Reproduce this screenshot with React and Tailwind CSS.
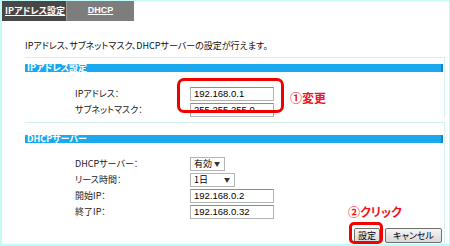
import React from 'react'

const jp = { fontFamily: '"Noto Sans CJK JP", "Liberation Sans", sans-serif', fontFeatureSettings: '"palt"' }
const num = { fontFamily: '"Liberation Sans", "Noto Sans CJK JP", sans-serif' }

function Bar({ title }) {
  return (
    <div className="h-[8px] w-[418px] bg-[#1aa9ee] border-r-2 border-[#1584c4] flex items-center pl-[2px]">
      <span className="text-[9px] leading-[8px] font-bold text-white whitespace-nowrap" style={jp}>{title}</span>
    </div>
  )
}

function Row({ label, children }) {
  return (
    <div className="flex items-center h-[14px]">
      <span className="w-[165px] pl-[50px] shrink-0 text-[9px] leading-[14px] text-[#222] whitespace-nowrap" style={jp}>{label}</span>
      {children}
    </div>
  )
}

function Field({ value }) {
  return (
    <div className="w-[84px] h-[14px] border border-[#b4b4b4] border-t-[#8c8c8c] bg-white pl-[3px] flex items-center text-[9.5px] text-black whitespace-nowrap" style={num}>
      {value}
    </div>
  )
}

function Pick({ value, width }) {
  return (
    <div className={`${width} h-[14px] border border-[#b4b4b4] bg-white pl-[3px] pr-[4px] flex items-center justify-between text-[9px] text-black whitespace-nowrap`} style={jp}>
      <span>{value}</span>
      <span className="text-[6px] leading-none text-[#333]">▼</span>
    </div>
  )
}

function Btn({ children, width }) {
  return (
    <div className={`${width} h-[15px] border border-[#707070] rounded-[2px] bg-gradient-to-b from-[#f6f6f6] to-[#d8d8d8] flex items-center justify-center text-[9px] text-black whitespace-nowrap`} style={jp}>
      {children}
    </div>
  )
}

export default function App() {
  return (
    <div className="relative w-[450px] h-[246px] bg-white border-l-2 border-t border-r border-b-2 border-[#c2fafa] overflow-hidden" style={jp}>
      <div className="flex -mt-px -ml-[2px] h-[21px]">
        <div className="w-[66px] bg-[#474747] flex items-center pl-[5px]">
          <span className="text-[9px] font-bold text-white underline whitespace-nowrap" style={jp}>IPアドレス設定</span>
        </div>
        <div className="w-[68px] bg-[#7d7d7d] border-l border-[#999] flex items-center justify-center">
          <span className="text-[9px] font-bold text-white underline" style={num}>DHCP</span>
        </div>
      </div>

      <div className="pl-[23px] pr-[5px]">
        <p className="mt-[19px] h-[12px] leading-[12px] text-[9px] text-[#111] whitespace-nowrap" style={jp}>
          IPアドレス、サブネットマスク、DHCPサーバーの設定が行えます。
        </p>

        <div className="mt-[5px] border-t border-r border-[#d4f1f1] pt-[6px] w-[420px]">
          <Bar title="IPアドレス設定" />
          <div className="mt-[15px] flex flex-col gap-[2px]">
            <Row label="IPアドレス："><Field value="192.168.0.1" /></Row>
            <Row label="サブネットマスク："><Field value="255.255.255.0" /></Row>
          </div>
        </div>

        <div className="mt-[5px] border-t border-r border-[#d4f1f1] pt-[12px] w-[420px]">
          <Bar title="DHCPサーバー" />
          <div className="mt-[14px] flex flex-col gap-[2px]">
            <Row label="DHCPサーバー："><Pick value="有効" width="w-[35px]" /></Row>
            <Row label="リース時間："><Pick value="1日" width="w-[45px]" /></Row>
            <Row label="開始IP："><Field value="192.168.0.2" /></Row>
            <Row label="終了IP："><Field value="192.168.0.32" /></Row>
          </div>
          <div className="mt-[9px] flex justify-end gap-[5px] pr-[2px]">
            <Btn width="w-[26px]">設定</Btn>
            <Btn width="w-[57px]">キャンセル</Btn>
          </div>
        </div>
      </div>

      {/* annotations */}
      <div className="absolute left-[175px] top-[77px] w-[107px] h-[35px] border-[3px] border-[#f20000] rounded-[7px]" />
      <span className="absolute left-[288px] top-[88px] text-[12px] font-bold text-[#f0141c]" style={jp}>①変更</span>
      <span className="absolute left-[346px] top-[202px] text-[12px] font-bold text-[#f0141c]" style={jp}>②クリック</span>
      <div className="absolute left-[347px] top-[221px] w-[34px] h-[22px] border-[3px] border-[#f20000] rounded-[5px]" />
    </div>
  )
}
